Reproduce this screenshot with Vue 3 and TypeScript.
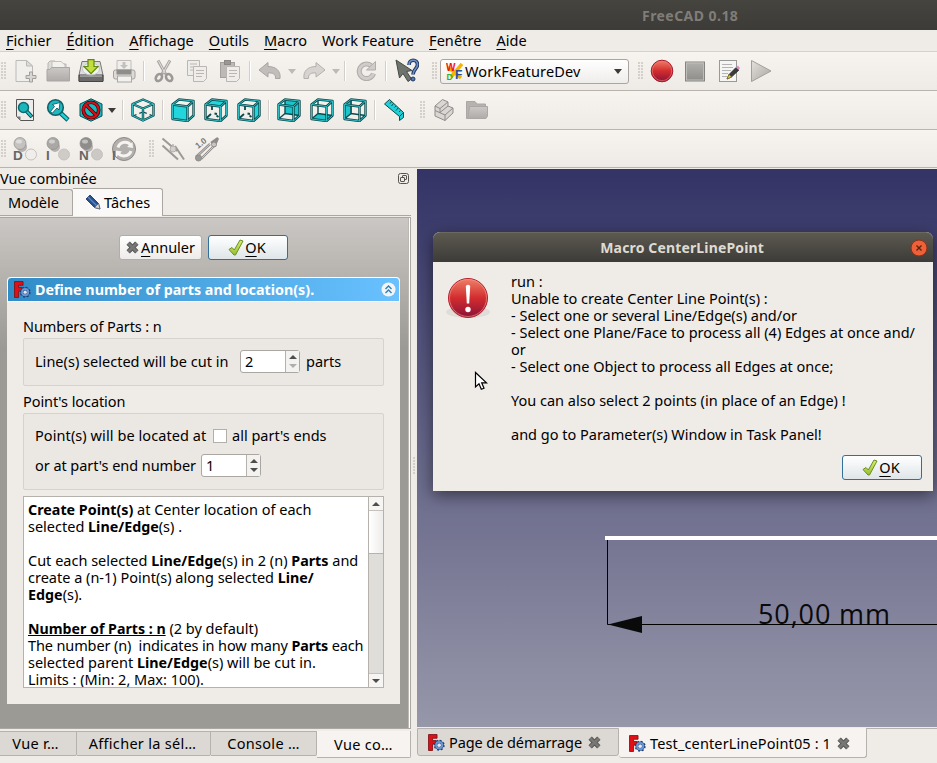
<script setup lang="ts">
import { ref } from 'vue'

interface MenuEntry {
  key: string
  rest: string
}
interface Segment {
  text: string
  bold?: boolean
  underline?: boolean
}
interface HelpRow {
  parts: Segment[]
  tight?: boolean
}
interface Cube {
  name: string
  face: string
}

const menus: MenuEntry[] = [
  { key: 'F', rest: 'ichier' },
  { key: 'É', rest: 'dition' },
  { key: 'A', rest: 'ffichage' },
  { key: 'O', rest: 'utils' },
  { key: 'M', rest: 'acro' },
  { key: '', rest: 'Work Feature' },
  { key: 'F', rest: 'enêtre' },
  { key: 'A', rest: 'ide' },
]

const frontViews: Cube[] = [
  { name: 'front', face: 'M1.5 6.500L16.500 8.500V23L1.500 21Z' },
  { name: 'top', face: 'M1.500 6.500L8 1.500L22.500 3L16.500 8.500Z' },
  { name: 'right', face: 'M16.500 8.500L22.500 3V17.500L16.500 23Z' },
]
const backViews: Cube[] = [
  { name: 'rear', face: 'M8 1.500L22.500 3V17.500L8 15.500Z' },
  { name: 'bottom', face: 'M1.500 21L8 15.500L22.500 17.500L16.500 23Z' },
  { name: 'left', face: 'M1.500 6.500L9 1.500V15.500L1.500 21Z' },
]

const modes = [
  { letter: 'D', ball: '#c4c2bf', dot: '#f0eeeb' },
  { letter: 'I', ball: '#aaa8a5', dot: '#cfccc8' },
  { letter: 'N', ball: '#8f8d8b', dot: '#cbc8c5' },
]

const help: HelpRow[] = [
  { parts: [{ text: 'Create Point(s)', bold: true }, { text: ' at Center location of each' }] },
  { parts: [{ text: 'selected ' }, { text: 'Line/Edge', bold: true }, { text: '(s) .' }] },
  { parts: [] },
  { parts: [{ text: 'Cut each selected ' }, { text: 'Line/Edge', bold: true }, { text: '(s) in 2 (n) ' }, { text: 'Parts', bold: true }, { text: ' and' }] },
  { parts: [{ text: 'create a (n-1) Point(s) along selected ' }, { text: 'Line/', bold: true }] },
  { parts: [{ text: 'Edge', bold: true }, { text: '(s).' }] },
  { parts: [] },
  { parts: [{ text: 'Number of Parts : n', bold: true, underline: true }, { text: ' (2 by default)' }] },
  { parts: [{ text: 'The number (n)  indicates in how many ' }, { text: 'Parts', bold: true }, { text: ' each' }], tight: true },
  { parts: [{ text: 'selected parent ' }, { text: 'Line/Edge', bold: true }, { text: '(s) will be cut in.' }] },
  { parts: [{ text: 'Limits : (Min: 2, Max: 100).' }] },
]

const message: string[] = [
  'run :',
  'Unable to create Center Line Point(s) :',
  '- Select one or several Line/Edge(s) and/or',
  '- Select one Plane/Face to process all (4) Edges at once and/',
  'or',
  '- Select one Object to process all Edges at once;',
  '',
  'You can also select 2 points (in place of an Edge) !',
  '',
  'and go to Parameter(s) Window in Task Panel!',
]

const parts = ref(2)
const endNumber = ref(1)
</script>

<template>
  <div class="window">
    <svg class="defs" width="0" height="0">
      <defs>
        <linearGradient id="gRed" x1="0" y1="0" x2="0" y2="1">
          <stop offset="0" stop-color="#f08068" /><stop offset=".5" stop-color="#d22c2e" /><stop offset="1" stop-color="#8c1238" />
        </linearGradient>
        <linearGradient id="gGrey" x1="0" y1="0" x2="1" y2="1">
          <stop offset="0" stop-color="#e4e1dd" /><stop offset="1" stop-color="#a9a6a2" />
        </linearGradient>
        <linearGradient id="gFolder" x1="0" y1="0" x2="0" y2="1">
          <stop offset="0" stop-color="#cbc8c5" /><stop offset="1" stop-color="#aeaba8" />
        </linearGradient>
        <linearGradient id="gStop" x1="0" y1="0" x2="0" y2="1">
          <stop offset="0" stop-color="#b3b1ae" /><stop offset="1" stop-color="#8e8c89" />
        </linearGradient>
        <linearGradient id="gCheck" x1="0" y1="0" x2="0" y2="1">
          <stop offset="0" stop-color="#d9ee72" /><stop offset="1" stop-color="#96bf2c" />
        </linearGradient>
        <symbol id="freecad" viewBox="0 0 16 16">
          <path d="M.5.500H8.500V4H4.300V6.200H7.500V9.500H4.300V15.500H.500Z" fill="#e01018" stroke="#7d1014" stroke-width=".8" />
          <circle cx="10.500" cy="10.500" r="4.300" fill="none" stroke="#1e3f77" stroke-width="1.800" stroke-dasharray="1.700 1.677" />
          <circle cx="10.500" cy="10.500" r="3" fill="none" stroke="#1e3f77" stroke-width="2.800" />
          <circle cx="10.500" cy="10.500" r="2.900" fill="none" stroke="#6a97d2" stroke-width="1.800" />
          <circle cx="10.500" cy="10.500" r="1.500" fill="#e7e7ea" />
        </symbol>
        <symbol id="cross" viewBox="1 1 12 12">
          <path d="M3 3L11 11M11 3L3 11" stroke="#555" stroke-width="4.400" />
          <path d="M3 3L11 11M11 3L3 11" stroke="#777775" stroke-width="2.600" />
        </symbol>
        <symbol id="check" viewBox="0 0 16 17">
          <path d="M1 10.500L4 8.500L6.300 11L12 1L15 2L7.500 16H6Z" fill="url(#gCheck)" stroke="#6a8f22" stroke-width="1" stroke-linejoin="round" />
        </symbol>
      </defs>
    </svg>

    <header class="titlebar"><span>FreeCAD 0.18</span></header>

    <nav class="menubar">
      <span v-for="m in menus" :key="m.key + m.rest" class="menu"><u v-if="m.key">{{ m.key }}</u>{{ m.rest }}</span>
    </nav>

    <div class="toolbar first">
      <i class="grip"></i>
      <span class="tool"><svg width="24" height="24" viewBox="0 0 24 24">
        <path d="M3 1.500H13.500L19.500 7V22.500H3Z" fill="#f1efec" stroke="#bcbab7" />
        <path d="M13.500 1.500V7H19.500Z" fill="#dedbd8" stroke="#bcbab7" />
        <path d="M16.500 13H19.500V16.500H23V19.500H19.500V23H16.500V19.500H13V16.500H16.500Z" fill="#d8d5d2" stroke="#a19f9c" />
      </svg></span>
      <span class="tool"><svg width="24" height="24" viewBox="0 0 24 24">
        <path d="M2 21V4L4 2H9L11 5H20V21Z" fill="#dedbd8" stroke="#b7b4b1" />
        <path d="M6 2.500H15L19 6V12H6Z" fill="#f3f1ee" stroke="#c3c0bd" />
        <path d="M1 22V10.500H4L5.500 8.500H23.500V22Z" fill="url(#gFolder)" stroke="#a9a6a3" />
      </svg></span>
      <span class="tool"><svg width="26" height="24" viewBox="0 0 26 24">
        <path d="M4 2.500H22L25 16V22H1V16Z" fill="#ddd" stroke="#777" />
        <path d="M1 16H25V22.500H1Z" fill="#6b6b6b" stroke="#444" />
        <path d="M2 17H24" stroke="#ccc" />
        <ellipse cx="13" cy="10" rx="8.500" ry="6" fill="#f2f2f2" stroke="#c5c5c5" />
        <path d="M10 .700H16V7.500H20L13 14.700L6 7.500H10Z" fill="#c2de3c" stroke="#5c8a12" stroke-width="1.200" />
      </svg></span>
      <span class="tool"><svg width="24" height="24" viewBox="0 0 24 24">
        <path d="M5 11V1.500H19V11" fill="#f1efec" stroke="#c0bdba" />
        <path d="M10.500 3H13.500V6H16L12 10L8 6H10.500Z" fill="#c3c0bd" />
        <rect x="1.500" y="11" width="21.500" height="9" rx="2" fill="#dddad7" stroke="#a3a19e" />
        <rect x="4.500" y="10.500" width="15" height="5" fill="#8f8d8a" />
        <rect x="5.500" y="17" width="14" height="6" fill="#f3f1ef" stroke="#aaa7a4" />
      </svg></span>
      <i class="sep"></i>
      <span class="tool"><svg width="24" height="24" viewBox="0 0 24 24" fill="none">
        <path d="M6 1.500L13.500 15M18 1.500L10 15" stroke="#a9a6a3" stroke-width="3" />
        <path d="M6.500 2L13 14M17.500 2L11 14" stroke="#e3e1de" stroke-width="1" />
        <ellipse cx="7.200" cy="18.500" rx="2.800" ry="3.800" transform="rotate(35 7 18)" stroke="#9b9996" stroke-width="2.600" />
        <ellipse cx="16.800" cy="18.500" rx="2.800" ry="3.800" transform="rotate(-35 17 18)" stroke="#9b9996" stroke-width="2.600" />
      </svg></span>
      <span class="tool"><svg width="24" height="24" viewBox="0 0 24 24" stroke="#b9b6b3" fill="#efedea">
        <path d="M2.500 1.500H14.500V16.500H2.500Z" /><path d="M5 5H12M5 8H12M5 11H9" />
        <path d="M8.500 7.500H21.500V19.500L18.500 22.500H8.500Z" /><path d="M11 11.500H19M11 14.500H19M11 17.500H17" />
      </svg></span>
      <span class="tool"><svg width="24" height="24" viewBox="0 0 24 24" stroke="#b9b6b3" fill="#efedea">
        <rect x="2.500" y="3.500" width="14" height="15" fill="#bcb9b6" stroke="#a3a09d" /><rect x="6.500" y="1.500" width="6" height="4" fill="#999794" stroke="#8a8885" />
        <path d="M8.500 7.500H21.500V19.500L18.500 22.500H8.500Z" /><path d="M11 11.500H19M11 14.500H19M11 17.500H17" />
      </svg></span>
      <i class="sep"></i>
      <span class="tool"><svg width="24" height="24" viewBox="0 0 24 24">
        <path d="M1 11L10 3.500V7.500C18 7.500 23 12 22 19.500H17.500C18 15 14.500 13.500 10 14V18Z" fill="#c0bdba" stroke="#a7a4a1" stroke-linejoin="round" />
      </svg></span>
      <span class="drop"><i class="tri pale"></i></span>
      <span class="tool"><svg width="24" height="24" viewBox="0 0 24 24">
        <path d="M23 11L14 3.500V7.500C6 7.500 1 12 2 19.500H6.500C6 15 9.500 13.500 14 14V18Z" fill="#d6d3d0" stroke="#b2afac" stroke-linejoin="round" />
      </svg></span>
      <span class="drop"><i class="tri pale"></i></span>
      <i class="sep"></i>
      <span class="tool refresh"><svg width="24" height="24" viewBox="0 0 24 24" fill="none">
        <path d="M17 6.500A7.300 7.300 0 1 0 19.500 14.500" stroke="#b0adaa" stroke-width="5" />
        <path d="M17 6.500A7.300 7.300 0 1 0 19.500 14.500" stroke="#cfccc9" stroke-width="3" />
        <path d="M21.500 2.500V11H12.500Z" fill="#cfccc9" stroke="#b0adaa" />
      </svg></span>
      <i class="sep"></i>
      <span class="tool"><svg width="26" height="26" viewBox="0 0 26 26">
        <path d="M3 2L6.500 20L10 15.500L15 23.500L18.500 21L13.500 13.500L19 12.500Z" fill="#6e736e" stroke="#454a47" />
        <path d="M16 7C16 .500 24.500 1 24.500 6.500C24.500 11 20 11 20 16.500" fill="none" stroke="#1d3763" stroke-width="3.600" />
        <path d="M16 7C16 .500 24.500 1 24.500 6.500C24.500 11 20 11 20 16.500" fill="none" stroke="#6f93c4" stroke-width="1.600" />
        <circle cx="20" cy="21" r="2" fill="#5479b0" stroke="#1d3763" />
      </svg></span>
      <i class="grip beforeCombo"></i>
      <div class="combo">
        <svg width="17" height="17" viewBox="0 0 17 17">
          <path d="M2 4L15 15M16 1L5 14" stroke="#f5b400" stroke-width="3.600" />
          <text x="0" y="8" class="wf red">W</text><text x="0.500" y="16.500" class="wf green">D</text>
          <text x="9" y="15.500" class="wf blue">F</text>
        </svg>
        <span class="comboText">WorkFeatureDev</span>
        <i class="tri"></i>
      </div>
      <i class="grip afterCombo"></i>
      <span class="tool"><svg width="24" height="24" viewBox="0 0 24 24">
        <circle cx="12" cy="12" r="10.800" fill="url(#gRed)" stroke="#a5182b" /><circle cx="12" cy="12" r="9.700" fill="none" stroke="#ee7a70" stroke-width=".8" opacity=".8" />
      </svg></span>
      <span class="tool"><svg width="24" height="24" viewBox="0 0 24 24">
        <rect x="2.500" y="3" width="19" height="19" fill="url(#gStop)" stroke="#858380" /><rect x="3.500" y="4" width="17" height="17" fill="none" stroke="#bfbdba" />
      </svg></span>
      <span class="tool"><svg width="24" height="24" viewBox="0 0 24 24">
        <rect x="3.500" y="1.500" width="17" height="21" fill="#f5f5f4" stroke="#999" />
        <path d="M6 5.500H16M6 8.500H17M6 11.500H15M6 14.500H12M6 17.500H11" stroke="#b3b3b3" />
        <path d="M11 20L13 15.500L20 8.500L23 11L15.500 18Z" fill="#3a3a3a" stroke="#222" stroke-width=".7" />
        <path d="M11 20L13 15.500L15.500 18Z" fill="#edd35b" stroke="#7a6414" stroke-width=".7" /><path d="M20 8.500L22 6.500L24 9L22.500 11Z" fill="#d88fc8" />
      </svg></span>
      <span class="tool"><svg width="24" height="24" viewBox="0 0 24 24"><path d="M2.500 1.500L22 12L2.500 22.500Z" fill="url(#gGrey)" stroke="#a19f9c" /></svg></span>
    </div>

    <div class="toolbar second">
      <i class="grip"></i>
      <span class="tool"><svg width="24" height="24" viewBox="0 0 24 24">
        <path d="M3.500 1.500H20.500V22.500H7.500L3.500 18.500Z" fill="#edecea" stroke="#565654" /><path d="M3.500 18.500H7.500V22.500Z" fill="#777" />
        <path d="M13 12.500L19 19" stroke="#073b40" stroke-width="4" /><path d="M13 12.500L18.500 18.500" stroke="#25c4cb" stroke-width="2" />
        <circle cx="10.500" cy="9.500" r="5" fill="#1cb5bd" stroke="#0b6a70" stroke-width="1.500" />
      </svg></span>
      <span class="tool"><svg width="24" height="24" viewBox="0 0 24 24">
        <path d="M13.500 14L22 22" stroke="#0a5a60" stroke-width="4.600" /><path d="M14 14.500L21.500 21.500" stroke="#1fd3d8" stroke-width="2.400" />
        <circle cx="9.500" cy="9.500" r="7.800" fill="#1fb9c1" stroke="#0b6268" stroke-width="1.600" />
        <path d="M4.500 13.500L8.500 8.500L6.500 6.500L14 4.500L13 12L11 10L6.500 15Z" fill="#fff" stroke="#0b4b50" stroke-width=".8" />
      </svg></span>
      <span class="tool"><svg width="24" height="24" viewBox="0 0 24 24">
        <path d="M12 .800L23 6V18L12 23.200L1 18V6Z" fill="#18b9bf" stroke="#075056" />
        <circle cx="12" cy="12" r="7.700" fill="none" stroke="#3a0004" stroke-width="3.600" /><path d="M6.500 6.500L17.500 17.500" stroke="#3a0004" stroke-width="3.600" />
        <circle cx="12" cy="12" r="7.700" fill="none" stroke="#d0101a" stroke-width="2.200" /><path d="M6.500 6.500L17.500 17.500" stroke="#d0101a" stroke-width="2.200" />
      </svg></span>
      <span class="drop wide"><i class="tri"></i></span>
      <i class="sep"></i>
      <span class="tool"><svg width="24" height="24" viewBox="0 0 24 24" fill="none" stroke-linejoin="round">
        <path d="M12 14V7M12 14L3 17.500M12 14L21 17.500" stroke="#0a4a4e" stroke-width="1.300" stroke-dasharray="4 3" />
        <path class="edge" d="M12 1.500L22.500 6V17.500L12 22.500L1.500 17.500V6ZM1.500 6L12 10.500L22.500 6M12 10.500V22.500" />
        <path class="shine" d="M12 1.500L22.500 6V17.500L12 22.500L1.500 17.500V6ZM1.500 6L12 10.500L22.500 6M12 10.500V22.500" />
      </svg></span>
      <i class="sep"></i>
      <span v-for="c in frontViews" :key="c.name" class="tool"><svg width="24" height="24" viewBox="0 0 24 24" fill="none" stroke-linejoin="round">
        <path d="M8 8V12M7 16L2.500 20M10.500 15.500L13 16M14.500 19L12.500 17.500" stroke="#0a4a4e" stroke-width="1.800" />
        <path :d="c.face" fill="#22d6dc" />
        <path class="edge" d="M1.500 6.500L16.500 8.500V23L1.500 21ZM1.500 6.500L8 1.500L22.500 3L16.500 8.500M22.500 3V17.500L16.500 23" />
        <path class="shine" d="M1.500 6.500L16.500 8.500V23L1.500 21ZM1.500 6.500L8 1.500L22.500 3L16.500 8.500M22.500 3V17.500L16.500 23" />
      </svg></span>
      <i class="sep"></i>
      <span v-for="c in backViews" :key="c.name" class="tool"><svg width="24" height="24" viewBox="0 0 24 24" fill="none" stroke-linejoin="round">
        <path :d="c.face" fill="#1cc5cc" />
        <path d="M8 1.500V15.500L1.500 21M8 15.500L22.500 17.500" stroke="#0a4a4e" stroke-width="1.400" />
        <path class="edge" d="M1.500 6.500L16.500 8.500V23L1.500 21ZM1.500 6.500L8 1.500L22.500 3L16.500 8.500M22.500 3V17.500L16.500 23" />
        <path class="shine" d="M1.500 6.500L16.500 8.500V23L1.500 21ZM1.500 6.500L8 1.500L22.500 3L16.500 8.500M22.500 3V17.500L16.500 23" />
      </svg></span>
      <i class="sep"></i>
      <span class="tool"><svg width="24" height="24" viewBox="0 0 24 24" stroke="#0a4a4e">
        <path d="M1.500 6L6.500 1.500L20.500 14.500V19.500L16.500 22.500V18.500Z" fill="#1fd0d7" stroke-linejoin="round" />
        <path d="M16.500 18.500L20.500 14.500M8.500 3.500L7 5.500M10.500 5.500L8.500 8M13 8L11.500 9.500M15 10L13 12.500M17.500 12.500L16 14" fill="none" />
      </svg></span>
      <i class="grip later"></i>
      <span class="tool"><svg width="24" height="24" viewBox="0 0 24 24" fill="#d9d6d3" stroke="#8e8c89" stroke-linejoin="round">
        <path d="M3 12.500V18L13 22.500L21 15V10L16 8V4L10.500 1.500L3 8Z" /><path d="M3 8L8 10.500L16 4M8 10.500V14.500L16 8M3 12.500L13 17L21 10M13 17V22.500" fill="none" />
      </svg></span>
      <span class="tool"><svg width="24" height="24" viewBox="0 0 24 24" stroke="#aaa7a4">
        <path d="M1.500 20.500V3.500H10L12 6H20.500V20.500Z" fill="#b5b2af" /><path d="M4.500 8.500H22.500V18L21 20.500H3Z" fill="url(#gFolder)" />
      </svg></span>
    </div>

    <div class="toolbar third">
      <i class="grip"></i>
      <span v-for="m in modes" :key="m.letter" class="tool"><svg width="26" height="26" viewBox="0 0 26 26">
        <circle cx="10" cy="11" r="5" fill="#b5b2af" />
        <circle cx="8" cy="7.500" r="6" :fill="m.ball" stroke="#8f8d8b" stroke-width=".7" /><ellipse cx="7" cy="5.500" rx="3" ry="2" fill="#fff" opacity=".45" />
        <circle cx="19" cy="18.500" r="5.500" :fill="m.dot" stroke="#c5c2bf" />
        <text x="1" y="24" class="mode">{{ m.letter }}</text>
      </svg></span>
      <span class="tool"><svg width="26" height="26" viewBox="0 0 26 26">
        <circle cx="13" cy="13" r="11.500" fill="#b2afac" stroke="#8d8b88" />
        <path d="M7 11.500C9 5 17 5 19.500 9M20 15C18 21 10 21 7.500 17.500" fill="none" stroke="#f5f4f2" stroke-width="3" />
        <path d="M16 11L22 12L21.500 6ZM11 15.500L5 14.500V21Z" fill="#f5f4f2" /><text x="1" y="24" class="mode">I</text>
      </svg></span>
      <i class="grip after"></i>
      <span class="tool"><svg width="24" height="24" viewBox="0 0 24 24" stroke="#9b9996" fill="none">
        <path d="M1.500 1.500L16 14M1.500 8.500L17 22.500M14 9L23 22.500" stroke-width="2" /><path d="M12 7V12" />
        <circle cx="12" cy="12" r="3" fill="#d3d0cd" stroke="#b0adaa" />
      </svg></span>
      <span class="tool"><svg width="26" height="26" viewBox="0 0 26 26" fill="none" stroke="#8f8d8a">
        <path d="M3 21L17 8M8 23L22 9M18 7L25 2M22 9L25 2" stroke-width="2.400" /><path d="M3 21L17 8M8 23L22 9" stroke="#dedbd8" stroke-width=".8" />
        <circle cx="5.500" cy="22" r="3" fill="#9b9996" /><circle cx="21" cy="8.500" r="2.500" fill="#c9c6c3" />
        <text x="5" y="13" class="dim" transform="rotate(-38 5 13)">1.0</text>
      </svg></span>
    </div>

    <main class="work">
      <aside class="dock">
        <div class="dockTitle"><span>Vue combinée</span>
          <svg width="11" height="11" viewBox="0 0 11 11" fill="none" stroke="#56544f"><rect x=".5" y=".5" width="10" height="10" rx="2" /><rect x="4.500" y="2.500" width="4" height="4" rx=".5" /><rect x="2.500" y="4.500" width="4" height="4" rx=".5" fill="#efebe7" /></svg>
        </div>
        <div class="tabs">
          <div class="tab">Modèle</div>
          <div class="tab on">
            <svg width="16" height="16" viewBox="0 0 16 16"><path d="M1 5L5 1L13.500 9.500L15 15L9.500 13.500Z" fill="#27508a" stroke="#15305a" stroke-width=".8" /><path d="M3 3L11.500 11.500" stroke="#5d88c0" stroke-width="1.200" /><path d="M9.500 13.500L13.500 9.500L15 15Z" fill="#d5d5d5" stroke="#555" stroke-width=".6" /></svg>
            <span>Tâches</span>
          </div>
        </div>
        <div class="panel">
          <div class="actions">
            <button class="btn cancel"><svg width="13" height="13"><use href="#cross" /></svg><span><u>A</u>nnuler</span></button>
            <button class="btn ok"><svg width="16" height="17"><use href="#check" /></svg><span><u>O</u>K</span></button>
          </div>
          <section class="task">
            <div class="taskHead">
              <svg width="17" height="17"><use href="#freecad" /></svg>
              <b>Define number of parts and location(s).</b>
              <svg class="fold" width="15" height="15" viewBox="0 0 15 15"><circle cx="7.500" cy="7.500" r="7" fill="#f3f4f5" /><path d="M4.500 7L7.500 4L10.500 7M4.500 11L7.500 8L10.500 11" fill="none" stroke="#2f7fb5" stroke-width="1.400" /></svg>
            </div>
            <div class="taskBody">
              <div class="caption">Numbers of Parts : n</div>
              <div class="group one">
                <div class="line snug"><span class="cutIn">Line(s) selected will be cut in</span>
                  <div class="spin"><span>{{ parts }}</span><div class="steps"><i class="up"></i><i class="down off"></i></div></div>
                  <span>parts</span></div>
              </div>
              <div class="caption">Point's location</div>
              <div class="group two">
                <div class="line"><span class="located">Point(s) will be located at</span><i class="box"></i><span>all part's ends</span></div>
                <div class="line"><span class="endNo">or at part's end number</span>
                  <div class="spin"><span>{{ endNumber }}</span><div class="steps"><i class="up"></i><i class="down"></i></div></div></div>
              </div>
              <div class="help">
                <div class="helpText">
                  <p v-for="(row, r) in help" :key="r" :class="{ tight: row.tight }"><span v-for="(s, k) in row.parts" :key="k" :class="{ strong: s.bold, under: s.underline }">{{ s.text }}</span></p>
                </div>
                <div class="scroll"><div class="cap"><i class="up"></i></div><div class="thumb"></div><div class="track"></div><div class="cap end"><i class="down"></i></div></div>
              </div>
            </div>
          </section>
        </div>
        <div class="dockTabs">
          <span class="dt a">Vue r…</span><span class="dt b">Afficher la sél…</span><span class="dt c">Console …</span><span class="dt d">Vue co…</span>
        </div>
      </aside>
      <div class="splitter"><i class="grip"></i></div>
      <section class="mdi">
        <div class="view">
          <svg width="520" height="558" viewBox="0 0 520 558">
            <path d="M188 369H520" stroke="#fff" stroke-width="4" />
            <path d="M190.500 371V455.500H520" fill="none" stroke="#000" />
            <path d="M191 455.500L225 447V464Z" fill="#0a0a0a" />
            <text x="341" y="455" textLength="132" class="measure">50,00 mm</text>
          </svg>
        </div>
        <div class="docTabs">
          <div class="doc"><svg width="17" height="17"><use href="#freecad" /></svg><span class="home">Page de démarrage</span><svg width="13" height="13"><use href="#cross" /></svg></div>
          <div class="doc on"><svg width="17" height="17"><use href="#freecad" /></svg><span class="test">Test_centerLinePoint05 : 1</span><svg width="13" height="13"><use href="#cross" /></svg></div>
          <div class="rest"></div>
        </div>
      </section>
    </main>

    <div class="dialog">
      <div class="dialogTitle"><b>Macro CenterLinePoint</b>
        <svg width="18" height="18" viewBox="0 0 18 18"><circle cx="9" cy="9" r="8" fill="#ee6038" stroke="#8a3018" /><path d="M6.500 6.500L11.500 11.500M11.500 6.500L6.500 11.500" stroke="#57240f" stroke-width="1.400" /></svg>
      </div>
      <div class="dialogBody">
        <svg class="alert" width="48" height="48" viewBox="0 0 48 48">
          <ellipse cx="24" cy="38" rx="22" ry="6" fill="#000" opacity=".06" />
          <circle cx="24" cy="24" r="19.500" fill="url(#gRed)" stroke="#b81e30" /><circle cx="24" cy="24" r="18.500" fill="none" stroke="#f0a18c" opacity=".6" />
          <path d="M21.800 12Q24 9.500 26.200 12L25.200 29.500H22.800Z" fill="#fff" /><circle cx="24" cy="35.500" r="2.700" fill="#fff" />
        </svg>
        <div class="message"><p v-for="(t, n) in message" :key="n">{{ t }}</p></div>
      </div>
      <div class="dialogFoot"><button class="btn ok"><svg width="16" height="17"><use href="#check" /></svg><span><u>O</u>K</span></button></div>
    </div>

    <svg class="cursor" width="14" height="20" viewBox="0 0 14 20"><path d="M1.500 1.500V16L5 12.800L7.300 18.300L10 17.200L7.700 11.800H12.500Z" fill="#fff" stroke="#000" stroke-width="1.200" /></svg>
  </div>
</template>

<style>
body { margin: 0; background: #efebe7; }
</style>

<style scoped>
* { box-sizing: border-box; }
.window { position: relative; width: 937px; height: 763px; overflow: hidden; display: flex; flex-direction: column; background: #efebe7; color: #000; font: 14.500px/17px "Noto Sans", "Open Sans", sans-serif; white-space: pre; }
.defs { position: absolute; }
svg { display: block; flex: none; }
u { text-decoration: underline; text-decoration-thickness: 1px; text-underline-offset: 3px; }
.titlebar { flex: none; height: 30px; padding: 0 0 0 642px; display: flex; align-items: center; background: linear-gradient(#45443f, #3c3b37); color: #807d78; font-weight: 700; font-size: 14px; letter-spacing: 0.450px; }
.menubar { flex: none; height: 21px; padding: 0 6px 1px; display: flex; gap: 15px; align-items: center; letter-spacing: 0.050px; }
.toolbar { flex: none; display: flex; align-items: center; border-top: 1px solid #b9b4ae; background: linear-gradient(#f7f4f0, #eeebe7); }
.first { height: 39px; border-top-color: #d5d0cb; }
.second { height: 39px; }
.third { height: 39px; border-bottom: 1px solid #b9b4ae; }
.grip { flex: none; width: 5px; height: 18px; margin: 0 2px 0 1px; background-image: radial-gradient(circle at 1px 1px, #c3beb9 0.600px, transparent 0.900px); background-size: 3px 3px; }
.grip.after { margin: 0 2px 0 9px; }
.grip.beforeCombo { margin: 0 3px 0 10px; }
.grip.afterCombo { margin: 0 2px 0 9px; }
.grip.later { margin: 0 2px 0 9px; }
.tool { flex: none; width: 33px; height: 33px; display: flex; align-items: center; justify-content: center; }
.tool.refresh { width: 34px; padding-left: 1px; }
.sep { flex: none; width: 2px; height: 20px; margin: 0 2px 0 3px; border-left: 1px solid #d3cec9; border-right: 1px solid #fff; }
.drop { width: 11px; display: flex; justify-content: center; }
.drop.wide { width: 12px; padding-right: 2px; }
.tri { flex: none; width: 0; height: 0; border: 4px solid transparent; border-top: 5px solid #3c3b37; border-bottom: 0; }
.tri.pale { border-top-color: #bdbab6; }
.combo { width: 189px; height: 25px; border: 1px solid #aaa5a0; border-radius: 3px; display: flex; align-items: center; gap: 2px; padding: 0 6px 0 5px; background: linear-gradient(#fff, #efedeb); }
.comboText { flex: 1; letter-spacing: 0.150px; }
.wf { font: bold 10px/10px "Liberation Sans", sans-serif; }
.red { fill: #f01212; }
.green { fill: #28b428; }
.wf.green { font-size: 8.500px; }
.wf.blue { fill: #264d9b; font-size: 12px; }
.mode { font: bold 13.500px "Liberation Sans", sans-serif; fill: #666; }
.dim { font: bold 8.500px "Liberation Sans", sans-serif; fill: #777; stroke: none; }
.edge { stroke: #0a4a4e; stroke-width: 2.400; }
.shine { stroke: #35c8ce; stroke-width: 0.900; }

.work { flex: 1; min-height: 0; display: flex; }
.dock { width: 411px; display: flex; flex-direction: column; }
.dockTitle { height: 20px; display: flex; align-items: center; justify-content: space-between; padding: 0 2px 0 0; }
.tabs { height: 28px; display: flex; align-items: flex-end; border-bottom: 1px solid #aaa6a1; }
.tab { height: 26px; width: 73px; padding: 4px 0 0 8px; border: 1px solid #aaa6a1; border-left: 0; border-bottom: 0; background: #e6e2de; border-radius: 0 3px 0 0; }
.tab.on { height: 28px; width: 90px; margin-bottom: -1px; display: flex; gap: 3px; padding: 5px 0 0 12px; background: #fbf9f7; }
.panel { flex: none; height: 512px; margin-top: 1px; border-top: 1px solid #aaa6a1; border-right: 1px solid #aaa6a1; box-shadow: inset -1px 0 #fff, inset -2px 0 #bbb7b2; border-bottom: 1px solid #aaa6a1; padding: 17px 10px 0 7px; background: linear-gradient(#cbc7c4, #9c9a94 130px); }
.actions { display: flex; gap: 6px; padding-left: 112px; }
.btn { height: 25px; display: flex; align-items: center; justify-content: center; font: inherit; color: #000; padding: 0; border: 1px solid #b1ada9; border-radius: 3px; background: linear-gradient(#fff, #eeecea); }
.cancel { width: 83px; gap: 2px; }
.btn.ok { width: 80px; gap: 1px; padding-right: 2px; border-color: #31709a; background: linear-gradient(#fff, #dfe5e8); }
.task { margin-top: 17px; height: 427px; display: flex; flex-direction: column; background: #efebe7; border-radius: 4px 4px 0 0; }
.taskHead { height: 25px; display: flex; align-items: center; padding: 0 3px 0 6px; gap: 4px; color: #fff; border: 1px solid #fff; border-radius: 4px 4px 0 0; background: linear-gradient(90deg, #308cc6, #69c2ff); font-size: 14.300px; }
.fold { margin-left: auto; }
.taskBody { padding: 16px 16px 0; }
.caption { letter-spacing: -0.080px; }
.group { border: 1px solid #d6d2cd; border-radius: 2px; background: #ebe7e3; padding-left: 11px; display: flex; flex-direction: column; }
.one { height: 48px; margin: 3px 0 7px; justify-content: center; }
.two { height: 77px; margin: 3px 0 6px; padding-top: 9px; gap: 5px; }
.line { display: flex; align-items: center; gap: 7px; height: 25px; }
.line > span { padding-bottom: 1px; }
.line.snug { gap: 6px; margin-bottom: 1px; }
.cutIn { width: 199px; letter-spacing: 0.020px; }
.located { width: 171px; letter-spacing: 0.080px; }
.endNo { width: 159px; letter-spacing: -0.050px; }
.box { width: 14px; height: 14px; margin-right: -2px; border: 1px solid #b3afaa; background: #fff; }
.spin { width: 60px; height: 23px; border: 1px solid #aaa6a2; border-radius: 3px; background: #fff; display: flex; align-items: center; justify-content: space-between; padding-left: 4px; }
.steps { width: 14px; height: 21px; border-left: 1px solid #b5b1ad; display: flex; flex-direction: column; align-items: center; justify-content: center; gap: 5px; background: #f4f2f0; }
.up, .down { width: 0; height: 0; border: 4px solid transparent; }
.up { border-top: 0; border-bottom: 4px solid #4f4d4a; }
.down { border-bottom: 0; border-top: 4px solid #4f4d4a; }
.down.off { border-top-color: #b0adaa; }
.help { height: 192px; border: 1px solid #b5b1ad; background: #fff; display: flex; justify-content: space-between; overflow: hidden; }
.helpText { padding: 4px 0 0 4px; }
p { margin: 0; height: 17px; }
.tight { letter-spacing: -0.120px; }
.strong { font-weight: 700; font-size: 14.300px; }
.under { text-decoration: underline; font-size: 14.200px; }
.scroll { flex: none; width: 15px; border-left: 1px solid #b5b1ad; display: flex; flex-direction: column; }
.cap { height: 14px; display: flex; align-items: center; justify-content: center; background: #f7f5f3; border-bottom: 1px solid #c5c1bd; }
.cap.end { border-bottom: 0; border-top: 1px solid #c5c1bd; }
.thumb { height: 43px; background: linear-gradient(90deg, #fff, #efedeb); border-bottom: 1px solid #b5b1ad; }
.track { flex: 1; background: #dfddda; }
.dockTabs { display: flex; align-items: flex-start; height: 32px; padding-top: 2px; }
.dt { height: 25px; border: 1px solid #b5b1ad; border-left: 0; border-radius: 0 0 2px 0; background: #dcd8d4; display: flex; align-items: center; justify-content: center; letter-spacing: 0.300px; }
.a { width: 77px; padding-right: 5px; }
.b { width: 134px; padding-right: 2px; }
.c { width: 106px; }
.d { width: 94px; height: 27px; background: #f6f3f0; border-top: 0; }
.splitter { width: 6px; display: flex; align-items: center; }
.splitter .grip { width: 3px; margin: 0 0 0 2px; }
.mdi { flex: 1; display: flex; flex-direction: column; }
.view { height: 558px; margin-top: 1px; background: linear-gradient(#333366, #9797aa); }
.measure { font: 27px "Open Sans", "DejaVu Sans", sans-serif; fill: #0a0a0a; }
.docTabs { display: flex; height: 36px; }
.doc { height: 28px; margin-top: 1px; border: 1px solid #b5b1ad; border-radius: 0 0 3px 3px; background: #dcd8d4; display: flex; align-items: center; padding: 0 0 0 10px; gap: 4px; width: 202px; }
.doc.on { background: #f6f3f0; border-top: 0; border-left: 0; width: 248px; height: 30px; padding-top: 1px; }
.home { width: 135px; letter-spacing: -0.080px; }
.test { width: 183px; letter-spacing: 0.130px; }
.rest { flex: 1; margin-top: 1px; border-top: 1px solid #b5b1ad; }

.dialog { position: absolute; left: 433px; top: 232px; width: 500px; height: 259px; background: #efebe7; border-radius: 7px 7px 0 0; box-shadow: 0 4px 16px rgba(0, 0, 0, .5); display: flex; flex-direction: column; }
.dialogTitle { height: 30px; flex: none; display: flex; align-items: center; justify-content: flex-end; padding-right: 5px; gap: 146px; color: #dfdbd2; border-radius: 7px 7px 0 0; background: linear-gradient(#5c5950, #3c3b37); border-top: 1px solid #6b685f; font-size: 14px; letter-spacing: 0.150px; }
.dialogTitle b { padding-bottom: 1px; }
.dialogBody { flex: 1; display: flex; gap: 19px; padding: 12px 0 0 11px; }
.message { margin-top: -1px; }
.dialogFoot { height: 36px; display: flex; justify-content: flex-end; padding-right: 11px; }
.cursor { position: absolute; left: 474px; top: 371px; }
</style>
